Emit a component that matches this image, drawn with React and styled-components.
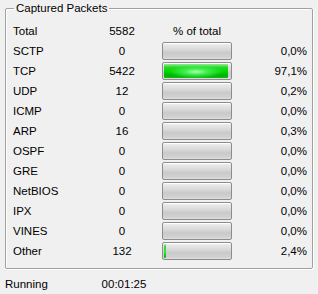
import React from 'react';
import styled, { createGlobalStyle } from 'styled-components';

const GlobalStyle = createGlobalStyle`
  html, body {
    margin: 0;
    padding: 0;
    background: #f0f0f0;
  }
  body {
    font-family: "Liberation Sans", Arial, sans-serif;
    font-size: 11.5px;
    color: #000000;
  }
`;

const Page = styled.div`
  width: 318px;
  height: 294px;
  padding: 0 5px;
  box-sizing: border-box;
  display: flex;
  flex-direction: column;
`;

const Group = styled.fieldset`
  margin: 0;
  padding: 6px 5px 8px 7px;
  border: 1px solid #a0a0a0;
  box-shadow: inset 1px 1px 0 #ffffff, 1px 1px 0 #ffffff;
  border-radius: 2px;
  min-width: 0;
`;

const Legend = styled.legend`
  padding: 0 2px;
  margin-left: 1px;
  font-size: 11.5px;
  line-height: 16px;
`;

const Table = styled.div`
  display: grid;
  grid-template-columns: 85px 48px 70px 1fr;
  row-gap: 2px;
  align-items: center;
`;

const Cell = styled.div`
  height: 18px;
  line-height: 18px;
  white-space: nowrap;
  text-align: ${(p) => p.$align || 'left'};
`;

const Header = styled(Cell)`
  text-align: center;
  margin-left: 16px;
  margin-right: -16px;
`;

const Bar = styled.div`
  position: relative;
  margin-left: 16px;
  margin-right: -16px;
  width: 70px;
  height: 18px;
  box-sizing: border-box;
  border: 1px solid #8c8c8c;
  border-radius: 2px;
  overflow: hidden;
  background: linear-gradient(
    #f4f4f4 0%,
    #e6e6e6 15%,
    #dadada 40%,
    #cacaca 60%,
    #d0d0d0 85%,
    #dedede 100%
  );
  box-shadow: inset 0 1px 0 #ffffff;
`;

const Fill = styled.div`
  position: absolute;
  left: 1px;
  top: 1px;
  bottom: 1px;
  border-radius: 1px;
  background: radial-gradient(ellipse at 50% 55%, #b0ffb4 0%, #40ee50 25%, transparent 60%),
    linear-gradient(#90ec90 0%, #28d428 25%, #00dc00 50%, #00b400 80%, #10b810 100%);
`;

const Footer = styled.div`
  display: grid;
  grid-template-columns: 95px 48px;
  height: 18px;
  line-height: 18px;
  margin-top: 6px;
`;

const rows = [
  { name: 'SCTP', count: 0, pct: 0.0 },
  { name: 'TCP', count: 5422, pct: 97.1 },
  { name: 'UDP', count: 12, pct: 0.2 },
  { name: 'ICMP', count: 0, pct: 0.0 },
  { name: 'ARP', count: 16, pct: 0.3 },
  { name: 'OSPF', count: 0, pct: 0.0 },
  { name: 'GRE', count: 0, pct: 0.0 },
  { name: 'NetBIOS', count: 0, pct: 0.0 },
  { name: 'IPX', count: 0, pct: 0.0 },
  { name: 'VINES', count: 0, pct: 0.0 },
  { name: 'Other', count: 132, pct: 2.4 },
];

const fmt = (v) => v.toFixed(1).replace('.', ',') + '%';

function App() {
  return (
    <Page>
      <GlobalStyle />
      <Group>
        <Legend>Captured Packets</Legend>
        <Table>
          <Cell>Total</Cell>
          <Cell $align="center">5582</Cell>
          <Header>% of total</Header>
          <Cell />
          {rows.map((r) => (
            <React.Fragment key={r.name}>
              <Cell>{r.name}</Cell>
              <Cell $align="center">{r.count}</Cell>
              <Bar>
                {r.pct >= 1 && <Fill style={{ width: Math.max(1, Math.round(r.pct / 100 * 66)) + 'px' }} />}
              </Bar>
              <Cell $align="right">{fmt(r.pct)}</Cell>
            </React.Fragment>
          ))}
        </Table>
      </Group>
      <Footer>
        <Cell>Running</Cell>
        <Cell $align="center">00:01:25</Cell>
      </Footer>
    </Page>
  );
}

export default App;
